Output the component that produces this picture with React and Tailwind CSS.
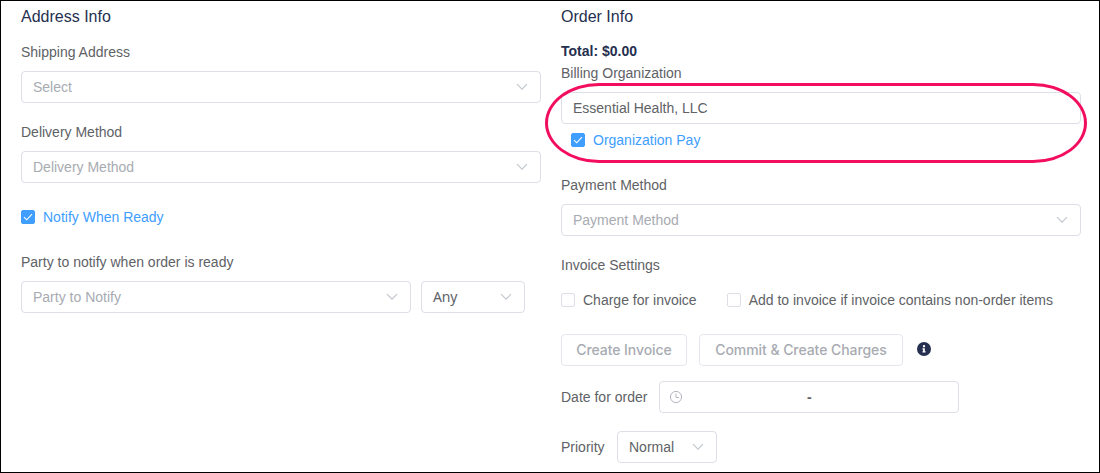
import React from "react";

function Chevron() {
  return (
    <svg width="12" height="8" viewBox="0 0 12 8" className="shrink-0" fill="none" stroke="#c0c4cc" strokeWidth="1.1">
      <path d="M1 1.2 L6 6.2 L11 1.2" />
    </svg>
  );
}

function Field({ children, className = "", chevron = true, muted = true }) {
  return (
    <div className={`flex h-8 items-center justify-between rounded border border-[#dcdfe6] pl-[11px] pr-3 ${muted ? "text-[#a8abb2]" : "text-[#606266]"} ${className}`}>
      <span className="whitespace-nowrap">{children}</span>
      {chevron && <Chevron />}
    </div>
  );
}

function Label({ children, className = "" }) {
  return <div className={`flex h-[39px] items-center whitespace-nowrap ${className}`}>{children}</div>;
}

function Check({ children, checked = false, className = "" }) {
  return (
    <label className={`flex h-[14px] items-center gap-2 whitespace-nowrap ${checked ? "text-[#409eff]" : ""} ${className}`}>
      <span className={`flex size-[14px] shrink-0 items-center justify-center rounded-[2px] border ${checked ? "border-[#409eff] bg-[#409eff]" : "border-[#dcdfe6] bg-white"}`}>
        {checked && (
          <svg width="12" height="12" viewBox="0 0 12 12" className="shrink-0" fill="none" stroke="white" strokeWidth="1.1">
            <path d="M2 6.2 L4.7 8.8 L10 3.2" />
          </svg>
        )}
      </span>
      <span>{children}</span>
    </label>
  );
}

function DisabledButton({ children, className }) {
  return (
    <button disabled className={`h-8 rounded border border-[#e4e7ed] font-[Inter,sans-serif] text-[14px] font-medium tracking-[-0.07px] whitespace-nowrap text-[#a8abb2] ${className}`}>
      {children}
    </button>
  );
}

export default function App() {
  return (
    <div className="relative flex h-[473px] w-[1100px] gap-5 overflow-hidden border border-black bg-white pl-5 font-['Liberation_Sans',Arial,sans-serif] text-[14px] leading-5 text-[#606266]">
      <section className="w-[520px]">
        <h2 className="flex h-[31px] items-center text-[16px] text-[#252f4f]">Address Info</h2>
        <Label>Shipping Address</Label>
        <Field>Select</Field>
        <Label className="mt-[9px]">Delivery Method</Label>
        <Field>Delivery Method</Field>
        <Check checked className="mt-[27px]">Notify When Ready</Check>
        <Label className="mt-[18px]">Party to notify when order is ready</Label>
        <div className="flex gap-[10px]">
          <Field className="w-[390px]">Party to Notify</Field>
          <Field className="w-[104px]" muted={false}>
            <span className="font-['Noto_Sans',sans-serif] tracking-[-0.2px]">Any</span>
          </Field>
        </div>
      </section>

      <section className="w-[520px]">
        <h2 className="flex h-[31px] items-center text-[16px] text-[#252f4f]">Order Info</h2>
        <p className="mt-2 flex h-[22px] items-center font-bold text-[#252f4f]">Total: $0.00</p>
        <div className="mb-2 flex h-[22px] items-center">Billing Organization</div>
        <Field muted={false} chevron={false}>Essential Health, LLC</Field>
        <Check checked className="mt-[9px] ml-[10px]">Organization Pay</Check>
        <Label className="mt-[18px]">Payment Method</Label>
        <Field>Payment Method</Field>
        <Label className="mt-[9px]">Invoice Settings</Label>
        <div className="mt-[9px] flex gap-[30px]">
          <Check>Charge for invoice</Check>
          <Check>Add to invoice if invoice contains non-order items</Check>
        </div>
        <div className="mt-[27px] flex">
          <DisabledButton className="w-[126px]">Create Invoice</DisabledButton>
          <DisabledButton className="ml-3 w-[204px]">Commit &amp; Create Charges</DisabledButton>
          <svg width="14" height="14" viewBox="0 0 512 512" className="mt-2 ml-[14px]">
            <path fill="#252f4f" d="M256 0a256 256 0 1 0 0 512 256 256 0 1 0 0-512zm0 110a43 43 0 1 1 0 86 43 43 0 1 1 0-86zm58 266c0 7-5 12-12 12h-92c-7 0-12-5-12-12v-24c0-7 5-12 12-12h12v-64h-12c-7 0-12-5-12-12v-24c0-7 5-12 12-12h64c7 0 12 5 12 12v100h16c7 0 12 5 12 12z" />
          </svg>
        </div>
        <div className="mt-[15px] flex items-center">
          <span className="w-[98px] whitespace-nowrap">Date for order</span>
          <div className="flex h-8 w-[300px] items-center rounded border border-[#dcdfe6] pl-[10px]">
            <svg width="12" height="12" viewBox="0 0 12 12" className="shrink-0 overflow-visible" fill="none" stroke="#b4b7be" strokeWidth="1">
              <circle cx="6" cy="6" r="5.6" />
              <path d="M6 2.6 V6.5 H9" />
            </svg>
            <span className="ml-[125px] font-bold text-[#606266]">-</span>
          </div>
        </div>
        <div className="mt-[18px] flex items-center">
          <span className="w-14">Priority</span>
          <Field className="w-[100px]" muted={false}>Normal</Field>
        </div>
      </section>
      <div className="pointer-events-none absolute top-[82px] left-[544px] h-[80px] w-[542px] rounded-[54px/40px] border-[3px] border-[#f20d5e]" />
    </div>
  );
}
